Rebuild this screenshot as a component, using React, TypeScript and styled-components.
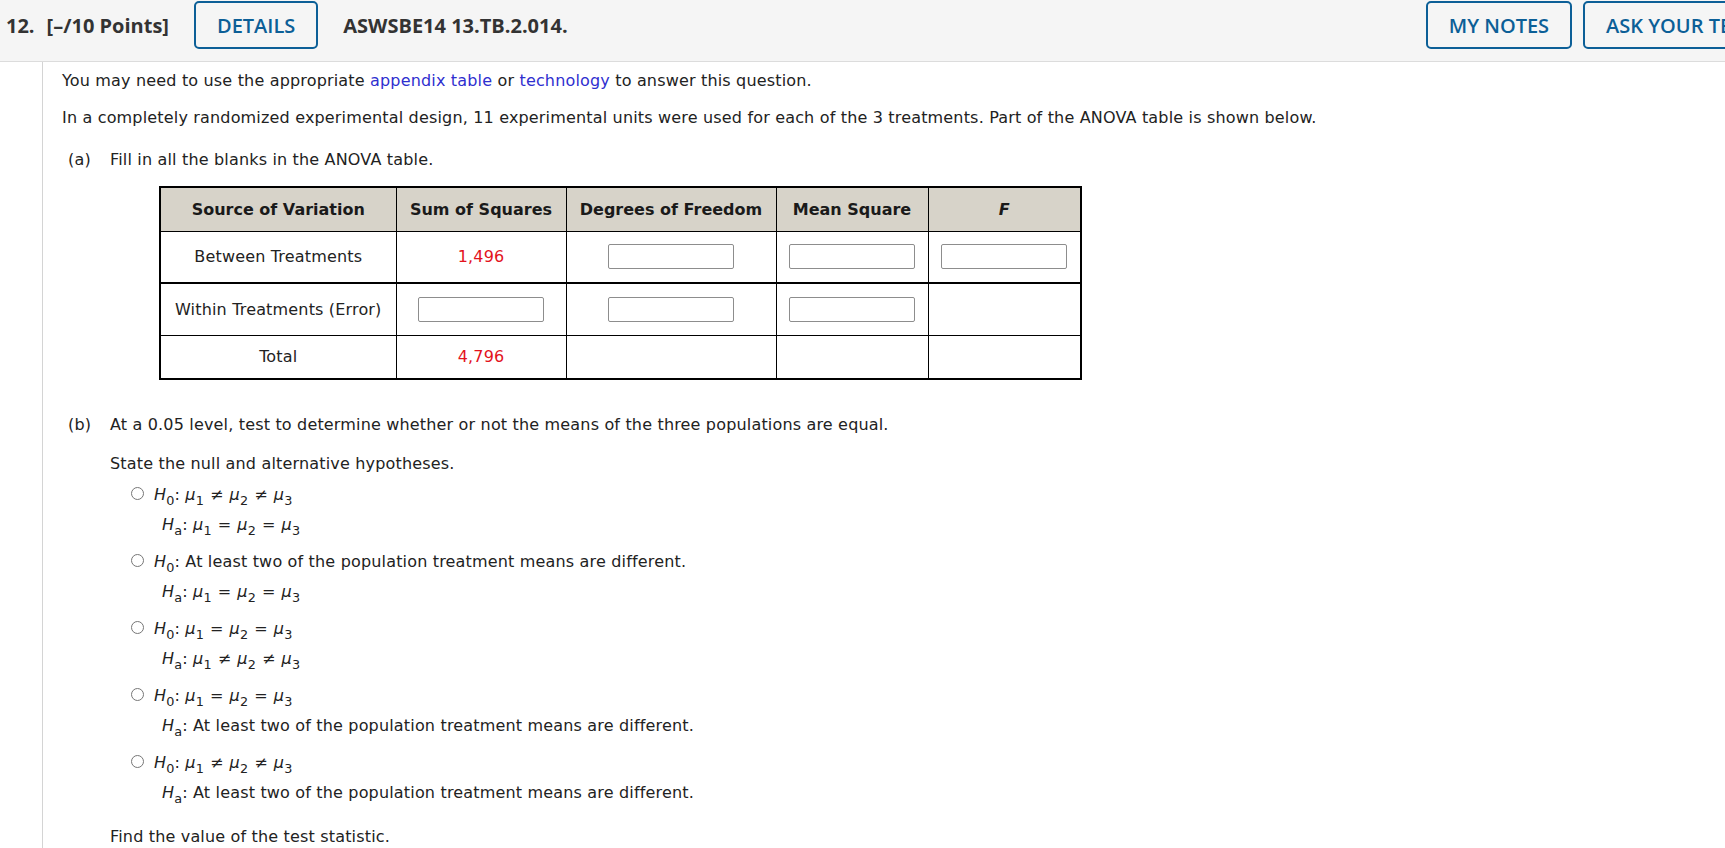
import React from "react";
import styled, { createGlobalStyle } from "styled-components";

const GlobalStyle = createGlobalStyle`
  html, body { margin: 0; padding: 0; background: #ffffff; overflow: hidden; }
  body {
    font-family: "DejaVu Sans", Verdana, sans-serif;
    font-size: 16px;
    line-height: 19px;
    letter-spacing: 0.17px;
    color: #222222;
  }
`;

const Page = styled.div`
  width: 1725px;
  height: 848px;
  overflow: hidden;
`;

const Header = styled.header`
  display: flex;
  align-items: center;
  width: 1833px;
  height: 62px;
  box-sizing: border-box;
  padding: 1px 14px 12px 6px;
  background: #f5f5f5;
  border-bottom: 1px solid #dcdcdc;
  font-family: "Open Sans", sans-serif;
  font-size: 20px;
  font-weight: 700;
  letter-spacing: 0;
  color: #333333;
`;

const QNumber = styled.span`
  margin-right: 12px;
`;

const Points = styled.span`
  margin-right: 25px;
`;

const Code = styled.span`
  margin-left: 25px;
`;

const HeaderButton = styled.button`
  height: 48px;
  padding: 0 21px;
  background: transparent;
  border: 2px solid #0c5f97;
  border-radius: 5px;
  color: #0c5f97;
  font-family: "Open Sans", sans-serif;
  font-size: 20px;
  font-weight: 600;
  letter-spacing: 0;
  white-space: nowrap;
  flex-shrink: 0;
`;

const RightGroup = styled.div`
  margin-left: auto;
  display: flex;
  gap: 11px;
`;

const Body = styled.main`
  margin-left: 42px;
  border-left: 1px solid #d4d4d4;
  padding: 9px 0 60px 19px;
`;

const Para = styled.p<{ $mt?: number }>`
  margin: ${(p) => p.$mt ?? 0}px 0 0 0;
`;

const Link = styled.span`
  color: #2f2fcf;
`;

const Part = styled.section<{ $mt: number }>`
  display: grid;
  grid-template-columns: 48px 1fr;
  margin-top: ${(p) => p.$mt}px;
`;

const PartLabel = styled.span`
  padding-left: 6px;
`;

const PartContent = styled.div``;

const Table = styled.table`
  border-collapse: collapse;
  table-layout: fixed;
  width: 921px;
  margin: 17px 0 0 49px;
  border: 2px solid #000;
`;

const Col = styled.col<{ $w: number }>`
  width: ${(p) => p.$w}px;
`;

const HeadRow = styled.tr`
  height: 44px;
`;

const BodyRow = styled.tr<{ $h: number }>`
  height: ${(p) => p.$h}px;
  & + & > td { border-top: 2px solid #000; }
`;

const Th = styled.th`
  background: #d7d3c9;
  border: 1px solid #000;
  padding: 0;
  font-weight: 700;
  letter-spacing: 0;
  color: #1a1a1a;
  text-align: center;
`;

const Td = styled.td`
  border: 1px solid #000;
  padding: 0;
  text-align: center;
  vertical-align: middle;
`;

const Given = styled.span`
  color: #e3121d;
`;

const Blank = styled.input`
  display: block;
  margin: 0 auto;
  width: 126px;
  height: 25px;
  box-sizing: border-box;
  border: 1px solid #8d8d8d;
  border-radius: 2px;
  background: #fff;
  padding: 0;
`;

const Options = styled.div`
  margin-top: 7px;
  padding-left: 21px;
  display: flex;
  flex-direction: column;
  gap: 7px;
`;

const Option = styled.label`
  display: flex;
  align-items: flex-start;
  gap: 10px;
`;

const Radio = styled.input`
  flex: 0 0 13px;
  width: 13px;
  height: 13px;
  margin: 7px 0 0 0;
`;

const Lines = styled.div`
  display: flex;
  flex-direction: column;
`;

const HLine = styled.div<{ $indent?: number }>`
  height: 30px;
  line-height: 30px;
  padding-left: ${(p) => p.$indent ?? 0}px;
  white-space: nowrap;
`;

const V = styled.i`
  font-style: italic;
`;

const Sub = styled.sub`
  font-size: 0.8em;
  vertical-align: -0.4em;
  line-height: 0;
  font-style: normal;
`;

const Op = styled.span`
  margin: 0 6px;
`;

const H = ({ s }: { s: string }) => (
  <>
    <V>H</V>
    <Sub>{s}</Sub>:
  </>
);

const Mu = ({ n }: { n: number }) => (
  <>
    <V>μ</V>
    <Sub>{n}</Sub>
  </>
);

const Chain = ({ op }: { op: string }) => (
  <>
    {" "}
    <Mu n={1} />
    <Op>{op}</Op>
    <Mu n={2} />
    <Op>{op}</Op>
    <Mu n={3} />
  </>
);

const Diff = () => <> At least two of the population treatment means are different.</>;

const options: { h0: React.ReactNode; ha: React.ReactNode }[] = [
  { h0: <Chain op="≠" />, ha: <Chain op="=" /> },
  { h0: <Diff />, ha: <Chain op="=" /> },
  { h0: <Chain op="=" />, ha: <Chain op="≠" /> },
  { h0: <Chain op="=" />, ha: <Diff /> },
  { h0: <Chain op="≠" />, ha: <Diff /> },
];

export default function App() {
  return (
    <Page>
      <GlobalStyle />
      <Header>
        <QNumber>12.</QNumber>
        <Points>[–/10 Points]</Points>
        <HeaderButton>DETAILS</HeaderButton>
        <Code>ASWSBE14 13.TB.2.014.</Code>
        <RightGroup>
          <HeaderButton>MY NOTES</HeaderButton>
          <HeaderButton>ASK YOUR TEACHER</HeaderButton>
        </RightGroup>
      </Header>
      <Body>
        <Para>
          You may need to use the appropriate <Link>appendix table</Link> or{" "}
          <Link>technology</Link> to answer this question.
        </Para>
        <Para $mt={18}>
          In a completely randomized experimental design, 11 experimental units were used for each of
          the 3 treatments. Part of the ANOVA table is shown below.
        </Para>
        <Part $mt={23}>
          <PartLabel>(a)</PartLabel>
          <PartContent>
            <div>Fill in all the blanks in the ANOVA table.</div>
            <Table>
              <colgroup>
                <Col $w={236} />
                <Col $w={170} />
                <Col $w={210} />
                <Col $w={152} />
                <Col $w={153} />
              </colgroup>
              <thead>
                <HeadRow>
                  <Th>Source of Variation</Th>
                  <Th>Sum of Squares</Th>
                  <Th>Degrees of Freedom</Th>
                  <Th>Mean Square</Th>
                  <Th>
                    <V>F</V>
                  </Th>
                </HeadRow>
              </thead>
              <tbody>
                <BodyRow $h={52}>
                  <Td>Between Treatments</Td>
                  <Td>
                    <Given>1,496</Given>
                  </Td>
                  <Td>
                    <Blank type="text" />
                  </Td>
                  <Td>
                    <Blank type="text" />
                  </Td>
                  <Td>
                    <Blank type="text" />
                  </Td>
                </BodyRow>
                <BodyRow $h={52}>
                  <Td>Within Treatments (Error)</Td>
                  <Td>
                    <Blank type="text" />
                  </Td>
                  <Td>
                    <Blank type="text" />
                  </Td>
                  <Td>
                    <Blank type="text" />
                  </Td>
                  <Td />
                </BodyRow>
                <BodyRow $h={44}>
                  <Td>Total</Td>
                  <Td>
                    <Given>4,796</Given>
                  </Td>
                  <Td />
                  <Td />
                  <Td />
                </BodyRow>
              </tbody>
            </Table>
          </PartContent>
        </Part>
        <Part $mt={35}>
          <PartLabel>(b)</PartLabel>
          <PartContent>
            <div>
              At a 0.05 level, test to determine whether or not the means of the three populations are
              equal.
            </div>
            <Para $mt={20}>State the null and alternative hypotheses.</Para>
            <Options>
              {options.map((o, i) => (
                <Option key={i}>
                  <Radio type="radio" name="hyp" />
                  <Lines>
                    <HLine>
                      <H s="0" />
                      {o.h0}
                    </HLine>
                    <HLine $indent={8}>
                      <H s="a" />
                      {o.ha}
                    </HLine>
                  </Lines>
                </Option>
              ))}
            </Options>
            <Para $mt={19}>Find the value of the test statistic.</Para>
          </PartContent>
        </Part>
      </Body>
    </Page>
  );
}
